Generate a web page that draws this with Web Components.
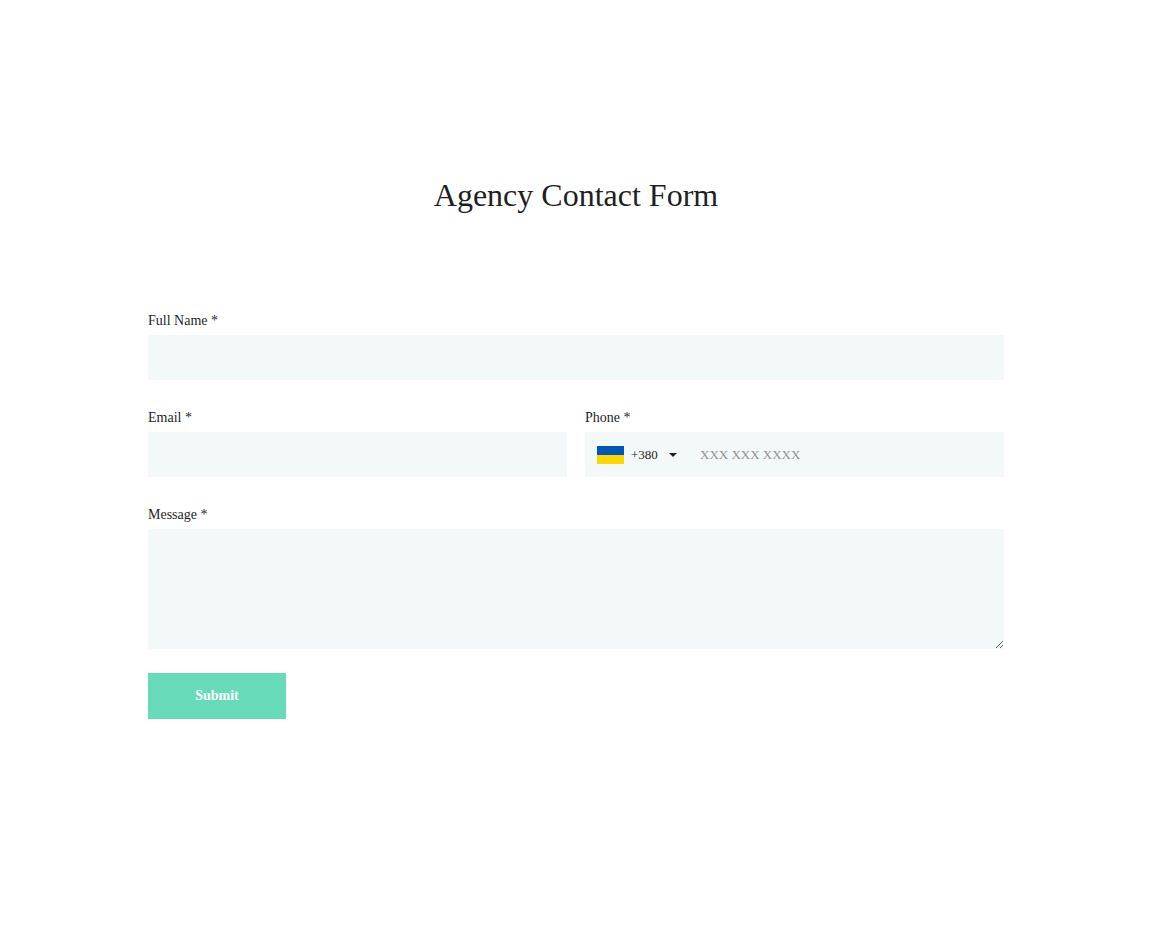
<!DOCTYPE html>
<html lang="en">
<head>
<meta charset="utf-8">
<meta name="viewport" content="width=device-width, initial-scale=1">
<title>Agency Contact Form</title>
<style>
  body {
    margin: 0;
    background: #fff;
    color: #1f1f1f;
    font: 14px/20px "Liberation Serif", serif;
    --field-bg: #f3f8f9;
    --accent: #67dab7;
    --muted: #929292;
  }
</style>
</head>
<body>
<contact-page heading="Agency Contact Form">
  <text-field label="Full Name" name="name"></text-field>
  <field-row>
    <text-field label="Email" name="email" type="email"></text-field>
    <phone-field label="Phone"></phone-field>
  </field-row>
  <message-field label="Message"></message-field>
  <submit-button>Submit</submit-button>
</contact-page>

<script>
  const fieldStyles = `
    :host { display: block; min-width: 0; }
    * { box-sizing: border-box; }
    label { display: block; height: 20px; margin-bottom: 4px; }
    input, textarea, select {
      display: block; margin: 0; border: 0; border-radius: 0; outline-offset: -1px;
      color: inherit; font: inherit; background: transparent;
    }
    .box { display: block; width: 100%; height: 45px; padding: 0 12px; background: var(--field-bg); }
  `;

  class ShadowElement extends HTMLElement {
    connectedCallback() {
      if (this.shadowRoot) return;
      this.attachShadow({ mode: "open" }).innerHTML = this.render();
    }
    attr(name, fallback = "") { return this.getAttribute(name) || fallback; }
  }

  customElements.define("contact-page", class extends ShadowElement {
    render() {
      return `
        <style>
          :host { display: block; }
          main { max-width: 856px; margin: 0 auto; padding: 173px 24px 48px 26px; }
          h1 { margin: 0 0 93px; font-size: 32px; line-height: 45px; font-weight: 400; text-align: center; }
          form { display: grid; gap: 28px; }
        </style>
        <main>
          <h1>${this.attr("heading")}</h1>
          <form><slot></slot></form>
        </main>`;
    }
  });

  customElements.define("field-row", class extends ShadowElement {
    render() {
      return `
        <style>
          :host { display: grid; grid-template-columns: 1fr 1fr; gap: 18px; }
          @media (max-width: 640px) { :host { grid-template-columns: 1fr; gap: 28px; } }
        </style>
        <slot></slot>`;
    }
  });

  customElements.define("text-field", class extends ShadowElement {
    render() {
      return `
        <style>${fieldStyles} .box { background: var(--field-bg); }</style>
        <label for="control">${this.attr("label")} *</label>
        <input class="box" id="control" type="${this.attr("type", "text")}" name="${this.attr("name")}" required>`;
    }
  });

  customElements.define("phone-field", class extends ShadowElement {
    render() {
      return `
        <style>
          ${fieldStyles}
          .box { display: flex; align-items: center; }
          svg { flex: none; display: block; }
          .flag { margin-right: 7px; }
          select { appearance: none; width: 30px; padding: 0; font-size: 13px; line-height: 20px; }
          .caret { margin: 0 23px 0 8px; fill: currentColor; }
          input { flex: 1; min-width: 0; height: 45px; padding: 0; font-size: 13px; }
          input::placeholder { color: var(--muted); opacity: 1; }
        </style>
        <label for="control">${this.attr("label")} *</label>
        <div class="box">
          <svg class="flag" width="27" height="18" viewBox="0 0 27 18" aria-hidden="true">
            <path fill="#0057b8" d="M0 0h27v9H0z"/><path fill="#ffd700" d="M0 9h27v9H0z"/>
          </svg>
          <select aria-label="Country code"><option>+380</option></select>
          <svg class="caret" width="8" height="4" viewBox="0 0 8 4" aria-hidden="true"><path d="M0 0h8L4 4z"/></svg>
          <input id="control" type="tel" name="phone" placeholder="XXX XXX XXXX" required>
        </div>`;
    }
  });

  customElements.define("message-field", class extends ShadowElement {
    render() {
      return `
        <style>
          ${fieldStyles}
          textarea.box { height: 120px; padding: 12px; background: var(--field-bg); resize: vertical; }
        </style>
        <label for="control">${this.attr("label")} *</label>
        <textarea class="box" id="control" name="message" required></textarea>`;
    }
  });

  customElements.define("submit-button", class extends ShadowElement {
    render() {
      return `
        <style>
          :host { display: block; margin-top: -4px; }
          button {
            display: block; min-width: 138px; height: 46px; margin: 0; padding: 0 24px; border: 0;
            background: var(--accent); color: #fff; font: inherit; font-weight: 700; cursor: pointer;
          }
        </style>
        <button type="submit"><slot></slot></button>`;
    }
  });
</script>
</body>
</html>
